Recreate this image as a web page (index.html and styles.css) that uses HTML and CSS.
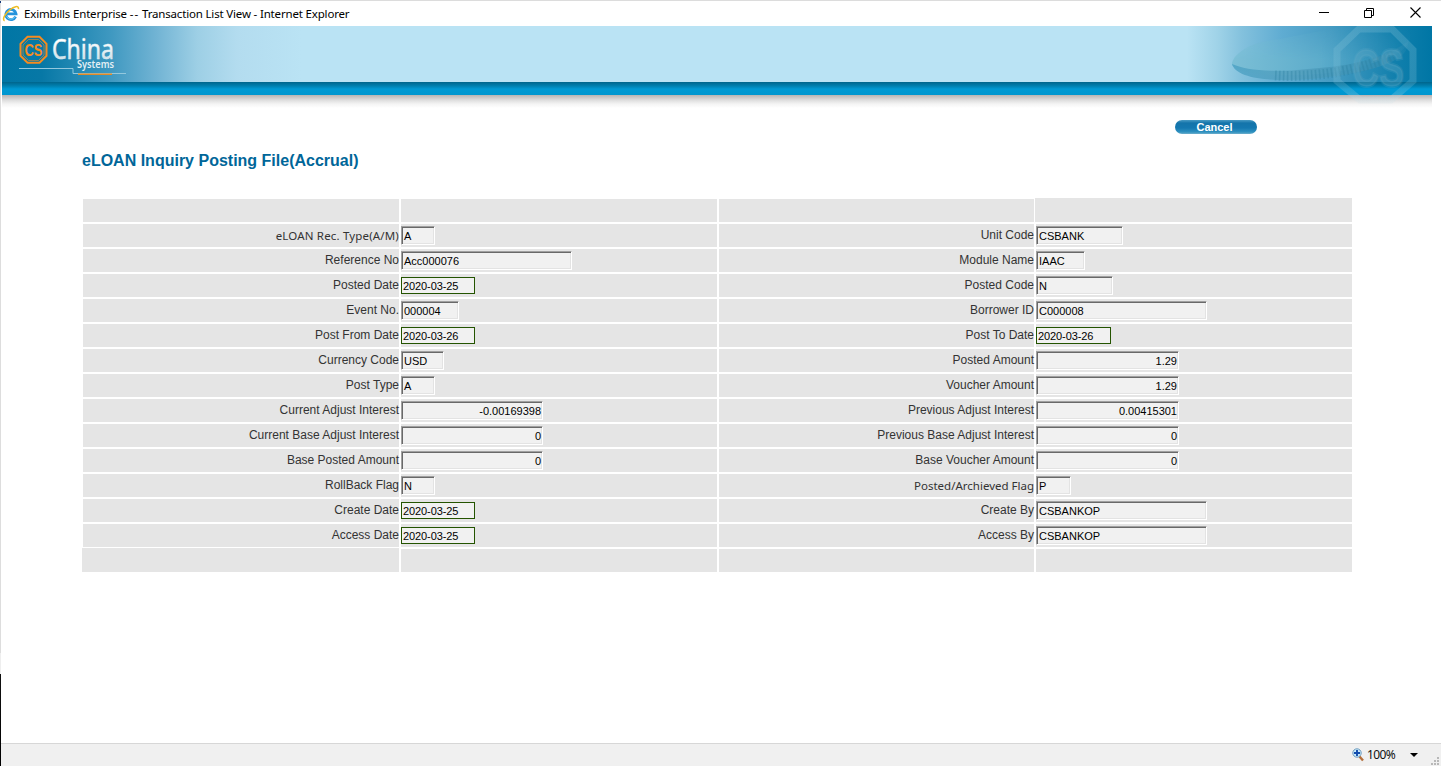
FILE: index.html
```html
<!DOCTYPE html>
<html lang="en">
<head>
<meta charset="utf-8">
<title>Eximbills Enterprise -- Transaction List View</title>
<link rel="stylesheet" href="styles.css">
</head>
<body>
<div class="window">
  <header class="titlebar">
    <svg class="ie" viewBox="0 0 18 18" width="18" height="18">
      <path d="M13.600 11.600A5.100 5.100 0 1 1 14 8.800H5.200" fill="none" stroke="#2593dc" stroke-width="2.800"/>
      <path d="M13 11.700A4.600 4.600 0 0 1 4.500 11" fill="none" stroke="#72cdf5" stroke-width="1"/>
      <path d="M2.600 15.800C-.3 14.700 3.200 8.300 8 4.800 11.500 1.800 16.900-.3 16.500 4.100" fill="none" stroke="#eebd24" stroke-width="1.500"/>
    </svg>
    <span class="title">Eximbills Enterprise <span class="dashes">--</span> Transaction List View - Internet Explorer</span>
    <svg class="controls" viewBox="0 0 102 14" width="102" height="14" fill="none" stroke="#000">
      <path d="M0 7.500h10M45.500 5.500h7v7h-7zM47.500 5V3.500h7v7H53" />
      <path d="M91.500 2.500l10 10m0-10l-10 10" stroke-width="1.100"/>
    </svg>
  </header>

  <div class="banner">
    <svg class="logo" viewBox="0 0 130 56" width="130" height="56">
      <defs><linearGradient id="silver" x2="0" y2="1"><stop offset=".35" stop-color="#fff"/><stop offset="1" stop-color="#b9d3df"/></linearGradient></defs>
      <path d="M25.500 10.800h12l7 7v12l-7 7h-12l-7-7v-12z" fill="none" stroke="#f68b1f" stroke-width="2"/>
      <path d="M26.500 13.500h10l5.500 5.500v10l-5.500 5.500h-10L21 29V19z" fill="#0879a6" stroke="#f68b1f" stroke-width=".6"/>
      <text class="logo-cs" x="22.500" y="29.500" textLength="18" lengthAdjust="spacingAndGlyphs">CS</text>
      <text class="logo-name" x="50" y="32.500" textLength="62" lengthAdjust="spacingAndGlyphs" fill="url(#silver)">China</text>
      <text class="logo-sub" x="75" y="42" textLength="37" lengthAdjust="spacingAndGlyphs">Systems</text>
      <path d="M17 42.500h54v5h53" fill="none" stroke="#93c8dd"/>
      <path d="M76 48.300h34" stroke="#e38a25" stroke-width="1.400"/>
    </svg>
    <svg class="emblem" viewBox="0 0 252 82" width="252" height="82">
      <defs>
        <linearGradient id="disc" x2="1"><stop stop-color="#7cbfd6"/><stop offset=".5" stop-color="#5caccb"/><stop offset="1" stop-color="#2088b3" stop-opacity=".4"/></linearGradient>
        <linearGradient id="rim" x2="1"><stop stop-color="#4ba1c4"/><stop offset=".35" stop-color="#549fbd"/><stop offset=".85" stop-color="#348eb3"/><stop offset="1" stop-color="#348eb3" stop-opacity=".2"/></linearGradient>
        <linearGradient id="fade" x2="0" y2="1"><stop stop-color="#fff" stop-opacity="0"/><stop offset=".6" stop-color="#fff"/></linearGradient>
        <linearGradient id="sign" gradientUnits="userSpaceOnUse" x1="0" y1="0" x2="0" y2="80"><stop stop-color="#83c1d7" stop-opacity=".3"/><stop offset=".8" stop-color="#83c1d7" stop-opacity=".25"/><stop offset=".9" stop-color="#c6dde6" stop-opacity=".3"/><stop offset="1" stop-color="#e0e8eb" stop-opacity=".3"/></linearGradient>
        <mask id="discmask"><path d="M0 0h252v56H0z" fill="url(#fade)"/></mask>
      </defs>
      <path d="M52 39C52 29 68 16 100 13L165 0h60c10 8 6 21-11 29-30 13-60 20-101 20C80 50 57 46 52 39z" fill="url(#disc)" mask="url(#discmask)"/>
      <path d="M52 38c13 6 40 9 76 5 46-3 80-12 100-28 2 16-20 26-65 34-48 8-106 8-111-11z" fill="url(#rim)" opacity=".8"/>
      <path d="M95 49.500c38 2 81-3 120-21" fill="none" stroke="#2a7f9f" stroke-opacity=".34" stroke-width="10" stroke-dasharray="1.600 2.400"/>
      <path d="M179 3h33l21 21v31l-22 19h-31l-23-19V24z" fill="none" stroke="url(#sign)" stroke-width="7"/>
      <text class="emblem-cs" x="172" y="60" textLength="52" lengthAdjust="spacingAndGlyphs">CS</text>
    </svg>
    <div class="stripe"></div>
    <div class="shade"></div>
  </div>

  <main class="page">
    <button class="cancel">Cancel</button>
    <h1>eLOAN Inquiry Posting File(Accrual)</h1>
    <div class="grid" id="grid"></div>
  </main>

  <footer class="status">
    <svg viewBox="0 0 13 14" width="13" height="14"><path d="M7.500 8.500l3.500 4" stroke="#b46f3b" stroke-width="2.400"/><circle cx="5" cy="5" r="4.200" fill="#c8eafa" stroke="#6b98bd"/><path d="M2 5h6M5 2v6" stroke="#124cae" stroke-width="1.900"/></svg>
    <span class="zoom">100%</span>
    <svg class="arrow" viewBox="0 0 8 4" width="8" height="4"><path d="M0 0h8L4 4z"/></svg>
    <svg class="grip" viewBox="0 0 9 9" width="9" height="9"><path d="M6 0h2v2H6zM3 3h2v2H3zM6 3h2v2H6zM0 6h2v2H0zM3 6h2v2H3zM6 6h2v2H6z" fill="#b8b8b8"/></svg>
  </footer>
  <div class="edge"></div>
</div>
<script src="form.js"></script>
</body>
</html>
```
FILE: styles.css
```css
* { box-sizing: border-box; }
body { margin: 0; background: #fff; font-family: "Liberation Sans", Arial, sans-serif; }
.window { position: relative; height: 766px; overflow: hidden; display: flex; flex-direction: column; border-top: 1px solid #dcdcdc; }
.titlebar { height: 25px; flex: none; display: flex; align-items: center; padding: 0 20px 0 2px; }
.ie { margin: 1px 4px 0 0; }
.title { margin-top: 1px; font: 11.5px/20px "Noto Sans", sans-serif; letter-spacing: -.17px; color: #000; white-space: nowrap; }
.dashes { letter-spacing: 1px; }
.controls { margin-left: auto; margin-top: -3px; }
.banner { position: relative; flex: none; width: 1430px; height: 82px; margin-left: 2px; padding-top: 56px; }
.banner::before { content: ""; position: absolute; inset: 0 0 auto; height: 56px; background: linear-gradient(90deg, #0076a5 0, #0778a6 40px, #2389b4 75px, #4099c1 110px, #72b4d4 155px, #9dcfe5 195px, #b3dcef 235px, #bae3f4 300px, #bae3f4 1185px, #a0d3e8 1215px, #83c1dd 1240px, #5facd2 1280px, #459bc2 1330px, #107fac 1395px, #0076a5 1430px); }
.logo { position: absolute; left: 0; top: 0; }
.logo-cs { font: bold 17px "Liberation Sans", sans-serif; fill: #f68b1f; }
.logo-name { font: 27px "Noto Sans", sans-serif; stroke: #e0edf2; stroke-width: .5px; }
.logo-sub { font: 600 10px "Noto Sans", sans-serif; fill: #e3eff4; }
.emblem { position: absolute; right: 0; top: 0; z-index: 1; }
.emblem-cs { font: bold 52px "Liberation Sans", sans-serif; fill: #65abc7; fill-opacity: .35; stroke: #65abc7; stroke-opacity: .2; stroke-width: 3px; }
.stripe { height: 13px; background: linear-gradient(#00658c 0, #0080b0 4px, #0099d3 7px, #0096cf); }
.shade { height: 13px; background: linear-gradient(#b8b4b3, #ddd 5px, #f4f4f4 9px, #fff); }
.page { flex: 1; padding: 12px 89px 0 82px; display: flex; flex-direction: column; }
.cancel { align-self: flex-end; margin-right: 95px; width: 82px; height: 14px; padding: 0 3px 0 0; border: 0; border-radius: 7px; background: linear-gradient(#4a9bc4 0, #1474aa 3px, #1478b0 8px, #2e91c0 12px, #6faecb); color: #fff; font: bold 11px/13px "Liberation Sans", Arial, sans-serif; }
h1 { margin: 17px 0 0; font-size: 16px; line-height: 20px; color: #006699; white-space: nowrap; }
.grid { margin-top: 28px; padding-left: 1px; display: grid; grid-template-columns: 316px 316px 315px 316px; grid-auto-rows: 23px; gap: 2px; }
.cell { background: #e5e5e5; display: flex; align-items: flex-start; }
.cell:nth-child(4) { margin: -1px 0 0 -1px; }
.cell:nth-child(57) { margin: -1px 0 0 -1px; }
.label { justify-content: flex-end; padding-top: 4px; color: #333; font-size: 12px; line-height: 14px; white-space: nowrap; }
.verdana { padding-top: 5px; font-family: "Noto Sans", Verdana, sans-serif; font-size: 11.5px; }
.cell.verdana:nth-child(5) { letter-spacing: .17px; }
.field { display: block; height: 19px; margin-top: 2px; border: 1px solid; border-color: #a0a0a0 #fff #fff #a0a0a0; background: #f1f1f1; box-shadow: inset 1px 1px #696969, inset -1px -1px #e3e3e3; padding: 2px 3px 0 2px; font-size: 11px; line-height: 15px; color: #000; white-space: nowrap; }
.date { height: 17px; margin-top: 3px; border-color: #245400; box-shadow: none; padding: 1px 1px 0; letter-spacing: -.1px; }
.num { text-align: right; padding-right: 1px; }
.status { height: 23px; flex: none; margin-left: 1px; border-top: 1px solid #d7d7d7; background: #f0f0f0; display: flex; align-items: center; padding-right: 1px; }
.status svg:first-child { margin-left: auto; margin-right: 2px; }
.zoom { width: 43px; font: 12px/20px "Noto Sans", sans-serif; letter-spacing: -.6px; color: #111; }
.arrow { margin-right: 1px; }
.grip { align-self: flex-end; margin-left: 12px; }
.edge { position: absolute; left: 0; top: 0; width: 1px; height: 766px; background: linear-gradient(#163b7a 0, #163b7a 2px, #ddd 2px, #ddd 652px, #eee 652px, #eee 673px, #111 673px, #000); }
```
FILE: form.js
```js
// Each row: left label, value, width, kind; then the right-hand field.
const rows = [
  ["eLOAN Rec. Type(A/M)", "A", 34, "", "Unit Code", "CSBANK", 87, ""],
  ["Reference No", "Acc000076", 171, "", "Module Name", "IAAC", 49, ""],
  ["Posted Date", "2020-03-25", 74, "date", "Posted Code", "N", 77, ""],
  ["Event No.", "000004", 58, "", "Borrower ID", "C000008", 171, ""],
  ["Post From Date", "2020-03-26", 74, "date", "Post To Date", "2020-03-26", 75, "date"],
  ["Currency Code", "USD", 43, "", "Posted Amount", "1.29", 143, "num"],
  ["Post Type", "A", 34, "", "Voucher Amount", "1.29", 143, "num"],
  ["Current Adjust Interest", "-0.00169398", 142, "num", "Previous Adjust Interest", "0.00415301", 143, "num"],
  ["Current Base Adjust Interest", "0", 142, "num", "Previous Base Adjust Interest", "0", 143, "num"],
  ["Base Posted Amount", "0", 142, "num", "Base Voucher Amount", "0", 143, "num"],
  ["RollBack Flag", "N", 34, "", "Posted/Archieved Flag", "P", 35, ""],
  ["Create Date", "2020-03-25", 74, "date", "Create By", "CSBANKOP", 171, ""],
  ["Access Date", "2020-03-25", 74, "date", "Access By", "CSBANKOP", 171, ""]
];
const blank = '<div class="cell"></div>'.repeat(4);
const pair = (label, value, width, kind) =>
  `<div class="cell label ${label.includes("/") ? "verdana" : ""}">${label}</div>` +
  `<div class="cell"><span class="field ${kind}" style="width:${width}px">${value}</span></div>`;
document.getElementById("grid").innerHTML =
  blank + rows.map(r => pair(...r.slice(0, 4)) + pair(...r.slice(4))).join("") + blank;
```
